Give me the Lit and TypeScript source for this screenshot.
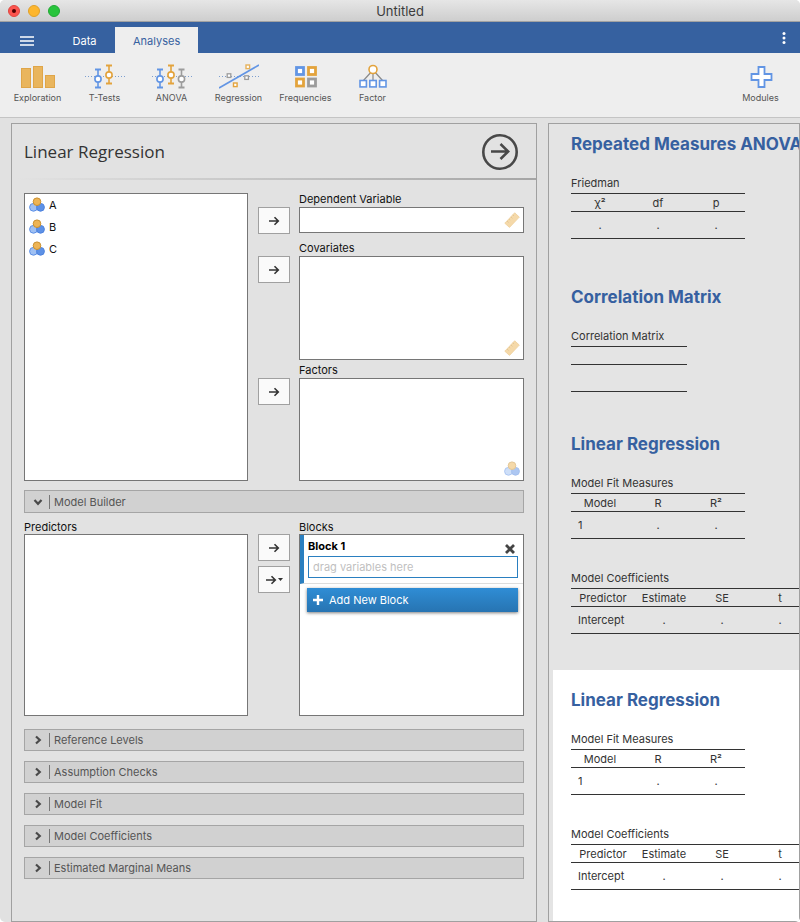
import { LitElement, html, svg, css, nothing, type TemplateResult } from "lit";
import { customElement, property, state } from "lit/decorators.js";
import { classMap } from "lit/directives/class-map.js";

type Measure = "nominal" | "continuous";

interface ResultTable {
  title: string;
  columns: string[];
  rows: string[][];
  labelled?: boolean;
  wide?: boolean;
}

interface Result {
  heading: string;
  tables: ResultTable[];
  gap: "large" | "medium" | "small";
  selected?: boolean;
}

const dotted = (y: number) =>
  svg`<line x1="0" y1=${y} x2="40" y2=${y} stroke="#7d9fd0" stroke-dasharray="1 2"></line>`;

const whisker = (x: number, top: number, bottom: number, mid: number, color: string) => svg`
  <g stroke=${color} fill="none">
    <path d="M${x - 3} ${top}h6M${x - 3} ${bottom}h6" stroke-width="2"></path>
    <path d="M${x} ${top}V${bottom}" stroke-width="1.6"></path>
    <circle cx=${x} cy=${mid} r="3.1" fill="#fff" stroke-width="1.6"></circle>
  </g>`;

const square = (x: number, y: number, size: number, color: string, width: number) =>
  svg`<rect x=${x} y=${y} width=${size} height=${size} fill="#fff" stroke=${color} stroke-width=${width}></rect>`;

const BLUE = "#6295e4";
const GOLD = "#e3a33c";
const GREY = "#9c9c9c";

const ribbonIcons: Record<string, TemplateResult> = {
  Exploration: svg`<g fill="#e9b55d" stroke="#dfa548">
    <rect x="3.5" y="4.5" width="9" height="19"></rect>
    <rect x="15.5" y="2.5" width="9" height="21"></rect>
    <rect x="27.5" y="11.5" width="9" height="12"></rect></g>` as unknown as TemplateResult,
  "T-Tests": svg`${dotted(12.5)}${whisker(13, 5.5, 23.5, 15, BLUE)}${whisker(24, 1.5, 19.5, 11, GOLD)}` as unknown as TemplateResult,
  ANOVA: svg`${dotted(12.5)}${whisker(8, 5.5, 23.5, 15, BLUE)}${whisker(19, 1.5, 19.5, 11, GOLD)}${whisker(29.5, 5.5, 23.5, 15, GREY)}` as unknown as TemplateResult,
  Regression: svg`${dotted(12.5)}
    ${square(27, 1, 3.6, "#e6b25c", 1.4)}${square(8.2, 9.8, 3.6, GREY, 1.3)}${square(25.8, 11.8, 3.6, GREY, 1.3)}
    <path d="M0 24 40 1" stroke=${BLUE} stroke-width="1.6"></path>
    ${square(14.5, 19, 3.6, GOLD, 1.4)}` as unknown as TemplateResult,
  Frequencies: svg`${square(10.5, 3.5, 7, BLUE, 2.8)}${square(22.5, 3.5, 7, GOLD, 2.8)}
    ${square(10.5, 15, 7, GOLD, 2.8)}${square(22.5, 15, 7, GREY, 2.8)}` as unknown as TemplateResult,
  Factor: svg`<path d="M20 6 10 17M20 6v11M20 6l10 11" stroke="#8a8a8a" stroke-width="1.2"></path>
    <circle cx="20" cy="5.5" r="4" fill="#fff" stroke=${GOLD} stroke-width="1.6"></circle>
    ${square(7, 16.5, 6.4, BLUE, 1.6)}${square(16.8, 16.5, 6.4, BLUE, 1.6)}${square(26.6, 16.5, 6.4, BLUE, 1.6)}` as unknown as TemplateResult,
  Modules: svg`<path d="M17.5 3h6v7h7v6h-7v7h-6v-7h-7v-6h7z" fill="#fff" stroke=${BLUE} stroke-width="1.8"></path>` as unknown as TemplateResult,
};

const measureIcon = (kind: Measure) =>
  kind === "nominal"
    ? html`<svg class="measure" viewBox="0 0 16 16" aria-hidden="true">
        <circle cx="4.5" cy="10.3" r="3.9" fill="#9fc0f3" stroke="#5c8fe6"></circle>
        <circle cx="11.5" cy="10.3" r="3.9" fill="#5d91e6" stroke="#4d82dd"></circle>
        <circle cx="8" cy="4.7" r="3.8" fill="#edb455" stroke="#c98f2e"></circle>
      </svg>`
    : html`<svg class="measure" viewBox="0 0 16 16" aria-hidden="true">
        <path d="M.8 11.2 10.7.8l4.6 4.3L5.5 15.4z" fill="#edb555" stroke="#e0a23c" stroke-width=".8"></path>
        <path d="M3 9l1.6 1.5M5 6.9 6.2 8M6.9 4.9l1.6 1.5M8.8 2.8 10 3.9" stroke="#c98f2e" fill="none"></path>
      </svg>`;

const arrow = html`<svg class="arrow" viewBox="0 0 12 10" aria-hidden="true">
  <path d="M1 5h9M6.5 1.2 10.3 5 6.5 8.8" fill="none" stroke="#333" stroke-width="1.6"></path>
</svg>`;

const chevron = html`<svg class="chevron" viewBox="0 0 10 10" aria-hidden="true">
  <path d="M3 1.5 6.8 5 3 8.5" fill="none" stroke="#4a4a4a" stroke-width="2.2"></path>
</svg>`;

const base = css`
  * { box-sizing: border-box; }
  button, input {
    font: inherit;
    color: inherit;
    margin: 0;
    padding: 0;
    border: 0;
    background: none;
  }
  h1, h2, p, ul { margin: 0; padding: 0; font: inherit; }
  svg { display: block; flex: none; }
`;

@customElement("analysis-options")
export class AnalysisOptions extends LitElement {
  @state() private sections = [
    "Reference Levels",
    "Assumption Checks",
    "Model Fit",
    "Model Coefficients",
    "Estimated Marginal Means",
  ];

  static styles = [
    base,
    css`
      :host {
        display: block;
        border: 1px solid #a0a0a0;
        background: #e2e2e2;
        font-size: 11px;
        line-height: 14px;
        color: #111;
      }
      .measure { width: 16px; height: 16px; }
      .header {
        display: flex;
        align-items: center;
        justify-content: space-between;
        height: 56px;
        padding: 0 18px 0 12px;
        background: linear-gradient(90deg, transparent 1%, #a5a5a5) bottom / 100% 2px no-repeat;
      }
      .title {
        font: 17px/24px "Open Sans", "Noto Sans", sans-serif;
        color: #333;
      }
      .run { width: 36px; height: 36px; border-radius: 50%; }
      .run svg { width: 36px; height: 36px; }
      .body { padding: 13px 12px 0; }
      .assign { display: grid; grid-template-columns: 224fr 276fr; }
      .list {
        border: 1px solid #767676;
        background: #fff;
        list-style: none;
      }
      .supplier { padding: 0 4px; }
      .variable { display: flex; align-items: center; gap: 4px; height: 22px; }
      .targets { display: flex; flex-direction: column; }
      .target {
        display: grid;
        grid-template-columns: 41px minmax(0, 1fr);
        grid-template-rows: 14px auto;
        padding-left: 10px;
      }
      .target .label { grid-column: 2; }
      .targets .label { line-height: 12px; }
      .single { margin-bottom: 8px; }
      .multiple { margin-bottom: 4px; }
      .drop {
        display: flex;
        align-items: flex-end;
        justify-content: flex-end;
        min-height: 103px;
        padding: 3px;
      }
      .multiple .drop { min-height: 104px; }
      .drop .measure { opacity: 0.5; }
      .single .drop { min-height: 26px; align-self: start; align-items: center; }
      .transfer {
        display: flex;
        align-items: center;
        justify-content: center;
        gap: 1px;
        width: 32px;
        height: 27px;
        border: 1px solid #a0a0a0;
        background: #fafafa;
      }
      .arrow { width: 12px; height: 10px; }
      .caret { width: 5px; height: 3px; }
      .section {
        display: flex;
        align-items: center;
        width: 100%;
        height: 22px;
        padding-left: 8px;
        border: 1px solid #a5a5a5;
        background: #d1d1d1;
        color: #555;
        text-align: left;
      }
      .section span { border-left: 1px solid #777; padding-left: 4px; }
      .chevron { width: 10px; height: 10px; margin-right: 6px; }
      .open .chevron { transform: rotate(90deg); }
      .builder { height: 23px; margin: 9px 0 7px; }
      .predictors { display: flex; flex-direction: column; }
      .predictors .list { flex: 1; min-height: 182px; }
      .transfers { display: flex; flex-direction: column; gap: 5px; }
      .block {
        padding: 4px 5px 5px 4px;
        border-left: 4px solid #2a7fc0;
        border-bottom: 1px solid #ddd;
      }
      .block-head { display: flex; justify-content: space-between; height: 17px; }
      .block-title { font-weight: 700; color: #000; }
      .remove { display: flex; align-items: flex-end; width: 14px; height: 16px; }
      .remove svg { width: 12px; height: 12px; }
      .terms {
        display: block;
        width: 100%;
        height: 22px;
        padding: 0 4px;
        border: 1px solid #2a7fc0;
        background: #fff;
      }
      .terms::placeholder { color: #bfbfbf; opacity: 1; }
      .add {
        display: flex;
        align-items: center;
        gap: 6px;
        width: calc(100% - 12px);
        height: 24px;
        margin: 4px 5px 0 7px;
        padding-left: 6px;
        background: linear-gradient(#2f8dd5, #2774b2);
        box-shadow: 0 1px 3px rgba(0, 0, 0, 0.5);
        color: #fff;
      }
      .add svg { width: 10px; height: 10px; }
      .sections { display: flex; flex-direction: column; gap: 10px; padding: 13px 0 24px; }
    `,
  ];

  private target(label: string, measure: Measure, kind: string) {
    const id = label.toLowerCase().replace(" ", "-");
    return html`<div class="target ${kind}">
      <span class="label" id=${id}>${label}</span>
      <button class="transfer" aria-label="Move to ${label}">${arrow}</button>
      <div class="list drop" role="listbox" aria-labelledby=${id}>${measureIcon(measure)}</div>
    </div>`;
  }

  private section(label: string, open = false) {
    return html`<button class="section ${classMap({ open, builder: open })}" aria-expanded=${open}>
      ${chevron}<span>${label}</span>
    </button>`;
  }

  render() {
    return html`
      <header class="header">
        <h1 class="title">Linear Regression</h1>
        <button class="run" aria-label="Hide options">
          <svg viewBox="0 0 36 36" fill="none" stroke="#484848">
            <circle cx="18" cy="18" r="16.7" stroke-width="2.6"></circle>
            <path d="M9 17.5h17M18.5 10l7.7 7.5-7.7 7.5" stroke-width="2.5"></path>
          </svg>
        </button>
      </header>
      <div class="body">
        <div class="assign">
          <ul class="list supplier" aria-label="Variables">
            ${["A", "B", "C"].map((v) => html`<li class="variable">${measureIcon("nominal")}${v}</li>`)}
          </ul>
          <div class="targets">
            ${this.target("Dependent Variable", "continuous", "single")}
            ${this.target("Covariates", "continuous", "multiple")}
            ${this.target("Factors", "nominal", "")}
          </div>
        </div>
        ${this.section("Model Builder", true)}
        <div class="assign">
          <div class="predictors">
            <span id="predictors">Predictors</span>
            <div class="list" role="listbox" aria-labelledby="predictors"></div>
          </div>
          <div class="target">
            <span class="label">Blocks</span>
            <div class="transfers">
              <button class="transfer" aria-label="Add term">${arrow}</button>
              <button class="transfer" aria-label="Add interaction">
                ${arrow}
                <svg class="caret" viewBox="0 0 5 3"><path d="M0 0h5L2.5 3z" fill="#333"></path></svg>
              </button>
            </div>
            <div class="list">
              <div class="block">
                <div class="block-head">
                  <label class="block-title" for="terms">Block 1</label>
                  <button class="remove" aria-label="Remove block">
                    <svg viewBox="0 0 12 12">
                      <path d="M2 2l8 8M10 2l-8 8" stroke="#444" stroke-width="2.8"></path>
                    </svg>
                  </button>
                </div>
                <input class="terms" id="terms" placeholder="drag variables here" />
              </div>
              <button class="add">
                <svg viewBox="0 0 10 10"><path d="M5 0v10M0 5h10" stroke="#fff" stroke-width="2.4"></path></svg>
                Add New Block
              </button>
            </div>
          </div>
        </div>
        <div class="sections">${this.sections.map((s) => this.section(s))}</div>
      </div>
    `;
  }
}

@customElement("results-view")
export class ResultsView extends LitElement {
  @property({ attribute: false }) results: Result[] = [];

  static styles = [
    base,
    css`
      :host {
        display: flex;
        flex-direction: column;
        min-width: 0;
        overflow: hidden;
        border: 1px solid #a0a0a0;
        background: #e4e4e4;
        padding-left: 4px;
        font-size: 11px;
        line-height: 14px;
        color: #333;
      }
      .result { padding: 9px 0 0 18px; }
      .large { margin-bottom: 38px; }
      .medium { margin-bottom: 36px; }
      .small { margin-bottom: 32px; }
      .selected { flex: 1; padding-top: 19px; margin-bottom: 0; background: #fff; }
      .heading {
        margin-bottom: 21px;
        font-size: 17px;
        line-height: 22px;
        font-weight: 700;
        color: #3660a0;
        white-space: nowrap;
      }
      table { border-spacing: 0; table-layout: fixed; width: 174px; margin-bottom: 32px; }
      table:last-child { margin-bottom: 0; }
      table.narrow { width: 116px; }
      table.wide { width: 238px; }
      table.wide th:first-child { width: 64px; }
      caption { text-align: left; padding-bottom: 3px; white-space: nowrap; }
      th, td { padding: 0; text-align: center; font-weight: 400; }
      th { height: 19px; border: solid #333; border-width: 1px 0; }
      td { height: 27px; border-bottom: 1px solid #333; }
      .labelled td:first-child { text-align: left; padding-left: 7px; }
    `,
  ];

  private table(t: ResultTable) {
    const classes = { labelled: !!t.labelled, wide: !!t.wide, narrow: t.columns.length === 2 };
    return html`<table class=${classMap(classes)}>
      <caption>${t.title}</caption>
      <thead><tr>${t.columns.map((c) => html`<th scope="col">${c || nothing}</th>`)}</tr></thead>
      <tbody>${t.rows.map((r) => html`<tr>${r.map((c) => html`<td>${c}</td>`)}</tr>`)}</tbody>
    </table>`;
  }

  render() {
    return this.results.map(
      (r) => html`<section class=${classMap({ result: true, [r.gap]: true, selected: !!r.selected })}>
        <h2 class="heading">${r.heading}</h2>
        ${r.tables.map((t) => this.table(t))}
      </section>`,
    );
  }
}

const regressionTables: ResultTable[] = [
  { title: "Model Fit Measures", columns: ["Model", "R", "R²"], rows: [["1", ".", "."]], labelled: true },
  {
    title: "Model Coefficients",
    columns: ["Predictor", "Estimate", "SE", "t"],
    rows: [["Intercept", ".", ".", "."]],
    labelled: true,
    wide: true,
  },
];

const results: Result[] = [
  {
    heading: "Repeated Measures ANOVA",
    tables: [{ title: "Friedman", columns: ["χ²", "df", "p"], rows: [[".", ".", "."]] }],
    gap: "large",
  },
  {
    heading: "Correlation Matrix",
    tables: [{ title: "Correlation Matrix", columns: ["", ""], rows: [["", ""]] }],
    gap: "small",
  },
  { heading: "Linear Regression", tables: regressionTables, gap: "medium" },
  { heading: "Linear Regression", tables: regressionTables, gap: "medium", selected: true },
];

@customElement("app-root")
export class AppRoot extends LitElement {
  static styles = [
    base,
    css`
      :host {
        display: flex;
        flex-direction: column;
        min-height: 100vh;
        overflow: hidden;
        border-radius: 5px;
        background: #e1e1e1;
        font-family: Inter, "Liberation Sans", sans-serif;
        font-size: 11px;
        line-height: 14px;
      }
      .titlebar {
        display: grid;
        grid-template-columns: 1fr auto 1fr;
        align-items: center;
        height: 22px;
        padding: 0 8px;
        border-bottom: 1px solid #a2a2a2;
        background: linear-gradient(#e6e6e6, #cecece);
        font-size: 13px;
        color: #3c3c3c;
      }
      .lights { display: flex; gap: 8px; }
      .light {
        display: grid;
        place-items: center;
        width: 12px;
        height: 12px;
        border: 1px solid #de4640;
        border-radius: 50%;
        background: #fc544e;
      }
      .light::after { content: ""; width: 4px; height: 4px; border-radius: 50%; background: #4d0000; }
      .minimise { border-color: #e0a028; background: #fdb62e; }
      .zoom { border-color: #22a834; background: #28c43c; }
      .minimise::after, .zoom::after { content: none; }
      .menubar { display: flex; align-items: stretch; height: 31px; background: #3661a0; color: #fff; }
      .menu { display: grid; place-items: center; width: 54px; padding-top: 6px; }
      .menu svg { width: 14px; height: 10px; }
      .tabs { display: flex; padding-top: 5px; }
      .tab { padding: 2px 18px 0; min-width: 61px; }
      .active { background: #eee; color: #3661a0; }
      .more { margin-left: auto; width: 32px; display: grid; place-items: center; }
      .more svg { width: 4px; height: 14px; }
      .ribbon {
        display: flex;
        height: 65px;
        padding: 0 6px 0 4px;
        border-bottom: 1px solid #c4c4c4;
        background: #eee;
      }
      .tool {
        display: flex;
        flex-direction: column;
        align-items: center;
        gap: 2px;
        width: 67px;
        padding-top: 11px;
        font-size: 9px;
        line-height: 12px;
        color: #555;
      }
      .tool svg { width: 40px; height: 26px; }
      .modules { margin-left: auto; }
      .workspace {
        flex: 1;
        display: grid;
        grid-template-columns: minmax(0, 526fr) minmax(0, 252fr);
        column-gap: 11px;
        padding: 5px 0 0 11px;
      }
    `,
  ];

  private tool(name: string, extra = "") {
    return html`<button class="tool ${extra}">
      <svg viewBox="0 0 40 26" fill="none" aria-hidden="true">${ribbonIcons[name]}</svg>${name}
    </button>`;
  }

  render() {
    return html`
      <header class="titlebar">
        <div class="lights">
          <button class="light" aria-label="Close"></button>
          <button class="light minimise" aria-label="Minimise"></button>
          <button class="light zoom" aria-label="Zoom"></button>
        </div>
        <span>Untitled</span>
      </header>
      <nav class="menubar">
        <button class="menu" aria-label="Menu">
          <svg viewBox="0 0 14 10"><path d="M0 1h14M0 5h14M0 9h14" stroke="#fff" stroke-width="1.6"></path></svg>
        </button>
        <div class="tabs" role="tablist">
          <button class="tab" role="tab" aria-selected="false">Data</button>
          <button class="tab active" role="tab" aria-selected="true">Analyses</button>
        </div>
        <button class="more" aria-label="Settings">
          <svg viewBox="0 0 4 14" fill="#fff">
            <circle cx="2" cy="2.5" r="1.5"></circle>
            <circle cx="2" cy="7" r="1.5"></circle>
            <circle cx="2" cy="11.5" r="1.5"></circle>
          </svg>
        </button>
      </nav>
      <div class="ribbon" role="toolbar" aria-label="Analyses">
        ${["Exploration", "T-Tests", "ANOVA", "Regression", "Frequencies", "Factor"].map((n) => this.tool(n))}
        ${this.tool("Modules", "modules")}
      </div>
      <main class="workspace">
        <analysis-options></analysis-options>
        <results-view .results=${results}></results-view>
      </main>
    `;
  }
}
